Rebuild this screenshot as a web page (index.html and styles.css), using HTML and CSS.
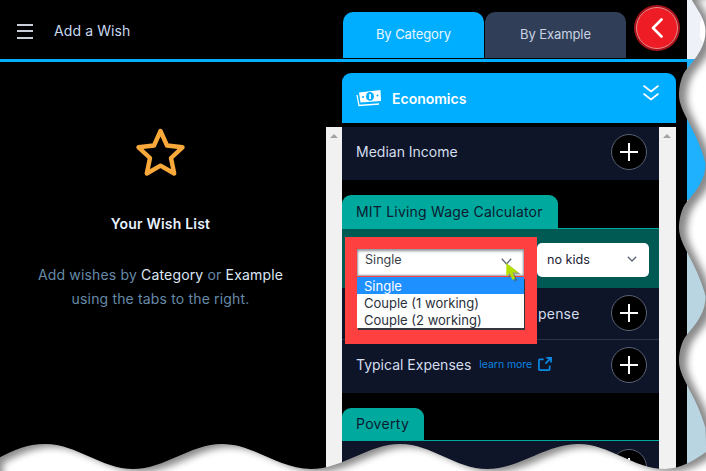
FILE: index.html
```html
<!DOCTYPE html>
<html lang="en">
<head>
    <meta charset="UTF-8">
    <meta name="viewport" content="width=device-width, initial-scale=1.0">
    <title>Add a Wish</title>
    <link rel="stylesheet" href="styles.css">
</head>
<body>
    <div class="page">
        <div class="app">
            <!-- Top bar with the tabs -->
            <header class="topbar">
                <div class="topbar-left">
                    <div class="burger"><span></span><span></span><span></span></div>
                    <div class="topbar-title">Add a Wish</div>
                </div>
                <nav class="tabs">
                    <div class="tab tab-active">By Category</div>
                    <div class="tab">By Example</div>
                </nav>
                <div class="back-btn">
                    <svg width="12" height="20" viewBox="0 0 12 20"><polyline points="10.5,1.5 2,10 10.5,18.5" fill="none" stroke="#fff" stroke-width="2.6" stroke-linecap="round" stroke-linejoin="round"/></svg>
                </div>
            </header>

            <div class="content">
                <!-- Left: the wish list -->
                <aside class="wish-panel">
                    <svg class="star" width="51" height="49" viewBox="0 0 51 49"><polygon points="25.5,3 32,17.5 47.5,19.3 36,30 39.2,45.5 25.5,37.6 11.8,45.5 15,30 3.5,19.3 19,17.5" fill="none" stroke="#f9a83a" stroke-width="4.4" stroke-linejoin="round"/></svg>
                    <h2 class="wish-title">Your Wish List</h2>
                    <p class="wish-text">Add wishes by <b>Category</b> or <b>Example</b><br>using the tabs to the right.</p>
                </aside>

                <!-- Right: category picker -->
                <section class="picker">
                    <div class="cat-head">
                        <svg class="cat-icon" width="26" height="18" viewBox="0 0 26 18">
                            <path d="M1 6 L3 16.5 L23 15" fill="none" stroke="#fff" stroke-width="1.3"/>
                            <polygon points="3,3.5 24.5,1 25,12 4.5,13.5" fill="#fff"/>
                            <ellipse cx="14" cy="7.4" rx="4" ry="4.4" fill="#00aeff"/>
                            <rect x="13.2" y="5" width="1.7" height="5" fill="#fff"/>
                            <circle cx="7" cy="8" r="1" fill="#00aeff"/>
                            <circle cx="21.5" cy="6.6" r="1" fill="#00aeff"/>
                        </svg>
                        <span class="cat-name">Economics</span>
                        <svg class="cat-toggle" width="16" height="16" viewBox="0 0 16 16"><path d="M1 1 L8 6.5 L15 1 M1 9 L8 14.5 L15 9" fill="none" stroke="#fff" stroke-width="1.6" stroke-linecap="round" stroke-linejoin="round"/></svg>
                    </div>

                    <div class="scroll-wrap">
                        <div class="scrollbar"><i class="scroll-up"></i></div>
                        <div class="list">
                            <div class="row">
                                <span class="row-label">Median Income</span>
                                <div class="plus"></div>
                            </div>

                            <div class="group-tab">MIT Living Wage Calculator</div>
                            <div class="band">
                                <div class="select">
                                    <span>no kids</span>
                                    <svg width="10" height="6" viewBox="0 0 10 6"><polyline points="0.8,0.8 5,5 9.2,0.8" fill="none" stroke="#5c6678" stroke-width="1.3"/></svg>
                                </div>

                                <!-- Red box and cursor drawn over the screenshot -->
                                <div class="annot">
                                    <div class="fake-select">
                                        <span>Single</span>
                                        <svg width="11" height="7" viewBox="0 0 11 7"><polyline points="0.8,0.8 5.5,6 10.2,0.8" fill="none" stroke="#5c6678" stroke-width="1.3"/></svg>
                                    </div>
                                    <div class="dropdown">
                                        <div class="option option-on">Single</div>
                                        <div class="option">Couple (1 working)</div>
                                        <div class="option">Couple (2 working)</div>
                                    </div>
                                    <svg class="cursor" width="17" height="20" viewBox="0 0 15 18">
                                        <polygon points="2,2 2,14 5,11 7.5,17 10,16 7.5,10.5 13,10.5" fill="#5a5f3a" opacity="0.6" transform="translate(1 0.5)"/>
                                        <polygon points="1,1 1,13 4,10 6.5,16 9,15 6.5,9.5 12,9.5" fill="#b4e000"/>
                                    </svg>
                                </div>
                            </div>
                            <div class="row row-split">
                                <!-- the red box hides the start of this label -->
                                <span class="row-label row-label-cut">pense</span>
                                <div class="plus"></div>
                            </div>
                            <div class="row">
                                <span class="row-label">Typical Expenses</span>
                                <a class="learn-more">learn more
                                    <svg width="14" height="14" viewBox="0 0 15 15"><path d="M6 2.5 H2 a1 1 0 0 0 -1 1 V13 a1 1 0 0 0 1 1 H11.5 a1 1 0 0 0 1 -1 V9 M8 7 L14 1 M9 1 H14 V6" fill="none" stroke="#0a8ce8" stroke-width="1.8"/></svg>
                                </a>
                                <div class="plus"></div>
                            </div>

                            <div class="group-tab group-tab-short">Poverty</div>
                            <div class="group-line"></div>
                            <div class="row row-last">
                                <div class="plus"></div>
                            </div>
                        </div>
                        <div class="scrollbar scrollbar-right"><i class="scroll-up"></i></div>
                    </div>
                </section>
            </div>
        </div>

        <div class="strip">
            <div class="strip-top"><span class="strip-dot"></span></div>
            <div class="strip-blue"></div>
            <div class="strip-pale"></div>
        </div>

        <!-- Torn paper edge of the screenshot -->
        <svg class="tear" width="706" height="471" viewBox="0 0 706 471">
            <defs>
                <path id="edge" d="M689 -5 C696 8 705 18 705.5 30 C706 48 694 60 686 70 C682 75 679 85 679 95 C679 112 697 130 705.5 163 C706 181 694 193 686 203 C682 208 679 218 679 228 C679 245 697 263 705.5 296 C706 314 694 326 686 336 C682 341 679 351 679 361 C679 378 697 396 705.5 428 C706 436 706 444 706 452 C695 460 680 469 665 469 C633 469 610 444 578 444 C546 444 519 469 487 469 C455 469 432 444 400 444 C368 444 343 469 311 469 C279 469 254 444 222 444 C190 444 165 469 133 469 C101 469 77 444 45 444 C25 444 10 452 -5 460 L-5 480 L720 480 L720 -5 Z"/>
                <clipPath id="tear-clip"><use href="#edge"/></clipPath>
                <filter id="soft"><feGaussianBlur stdDeviation="3.5"/></filter>
            </defs>
            <use href="#edge" fill="#8a8a8a"/>
            <g clip-path="url(#tear-clip)">
                <use href="#edge" fill="#fff" filter="url(#soft)" transform="translate(8 3)"/>
            </g>
        </svg>
    </div>
</body>
</html>
```

FILE: styles.css
```css
* {
    box-sizing: border-box;
}

body {
    margin: 0;
    background-color: #000;
    font-family: Inter, "Liberation Sans", sans-serif;
    font-size: 14px;
    overflow: hidden;
}

.page {
    position: relative;
    display: flex;
    width: 706px;
    height: 471px;
    overflow: hidden;
}

.app {
    width: 687px;
    flex: none;
}

/* Top bar */
.topbar {
    display: flex;
    align-items: flex-end;
    height: 62px;
    padding-right: 9px;
    border-bottom: 3px solid #00aeff;
}

.topbar-left {
    display: flex;
    align-items: center;
    align-self: stretch;
    flex: 1;
    padding: 3px 0 0 17px;
}

.burger {
    display: flex;
    flex-direction: column;
    gap: 4.5px;
    width: 16px;
}

.burger span {
    height: 2px;
    background-color: #c9ced8;
}

.topbar-title {
    margin: -2px 0 0 21px;
    color: #c8d8f0;
    letter-spacing: 0.1px;
}

.tabs {
    display: flex;
    gap: 1px;
    margin-bottom: 1px;
}

.tab {
    display: flex;
    align-items: center;
    justify-content: center;
    width: 141px;
    height: 46px;
    padding-bottom: 2px;
    border-radius: 10px 10px 0 0;
    background-color: #303f57;
    color: #c8d2e2;
    font-size: 13px;
    letter-spacing: -0.1px;
}

.tab-active {
    background-color: #00aeff;
    color: #e8f6ff;
}

.back-btn {
    display: flex;
    align-items: center;
    justify-content: center;
    width: 42px;
    height: 42px;
    margin: 0 0 10px 10px;
    border-radius: 50%;
    background-color: #ee1c25;
    border: 1px solid #e88a8e;
    box-shadow: 0 0 0 2px #a5141b;
}

.content {
    display: flex;
}

/* Wish list */
.wish-panel {
    display: flex;
    flex-direction: column;
    align-items: center;
    width: 326px;
    flex: none;
    padding: 66px 5px 0 0;
}

.star {
    display: block;
}

.wish-title {
    margin: 38px 0 0;
    color: #e8f2ff;
    font-size: 14px;
    font-weight: 600;
    line-height: 17px;
    letter-spacing: 0.2px;
}

.wish-text {
    margin: 31px 0 0;
    color: #668aa8;
    line-height: 24px;
    text-align: center;
    letter-spacing: 0.16px;
}

.wish-text b {
    color: #dde8f5;
    font-weight: 400;
}

/* Category picker */
.picker {
    width: 350px;
    flex: none;
    padding-top: 11px;
}

.cat-head {
    display: flex;
    align-items: center;
    height: 50px;
    margin-left: 16px;
    padding: 0 17px 0 14px;
    border-radius: 9px 9px 0 0;
    background-color: #00aeff;
    color: #fff;
}

.cat-name {
    margin-left: 10px;
    font-weight: 600;
}

.cat-toggle {
    margin: -10px 0 0 auto;
}

.scroll-wrap {
    display: flex;
    height: 344px;
    margin-top: 4px;
}

.scrollbar {
    display: flex;
    justify-content: center;
    width: 16px;
    flex: none;
    padding: 7px 1px 0 0;
    background-color: #f1f1f1;
}

.scrollbar-right {
    width: 17px;
}

.scroll-up {
    width: 0;
    height: 0;
    border-left: 4px solid transparent;
    border-right: 4px solid transparent;
    border-bottom: 4px solid #a3a3a3;
}

.list {
    flex: 1;
    min-width: 0;
}

.row {
    display: flex;
    align-items: center;
    padding: 7px 12px 10px 14px;
    background-color: #0e1528;
}

.row-split {
    padding-bottom: 8px;
    border-bottom: 1px solid #2c3448;
}

.row-last {
    padding-top: 8px;
}

.row-label {
    margin-top: -2px;
    color: #d3deee;
}

.row-label-cut {
    margin: 0 0 0 182px;
    letter-spacing: 0.2px;
}

.plus {
    position: relative;
    width: 36px;
    height: 36px;
    flex: none;
    margin-left: auto;
    border-radius: 50%;
    border: 1px solid #5a6274;
    background-color: #000;
}

.plus::before,
.plus::after {
    content: "";
    position: absolute;
    background-color: #fff;
}

.plus::before {
    left: 8px;
    right: 8px;
    top: 16px;
    height: 2px;
}

.plus::after {
    top: 8px;
    bottom: 8px;
    left: 16px;
    width: 2px;
}

.learn-more {
    display: flex;
    align-items: center;
    gap: 6px;
    margin: -2px 0 0 8px;
    color: #0a84e0;
    font-size: 10.5px;
    letter-spacing: -0.05px;
}

.group-tab {
    display: flex;
    align-items: center;
    width: fit-content;
    height: 33px;
    margin-top: 15px;
    padding: 0 15px 0 14px;
    border-radius: 9px 9px 0 0;
    background-color: #00a99d;
    color: #0b1a30;
    letter-spacing: 0.2px;
}

.group-tab-short {
    height: 32px;
    padding-bottom: 1px;
    letter-spacing: 0.3px;
}

.group-line {
    height: 1px;
    background-color: #00a99d;
}

.band {
    position: relative;
    display: flex;
    justify-content: flex-end;
    height: 60px;
    padding: 14px 10px 0 0;
    border-top: 1px solid #00a99d;
    background-color: #005a54;
}

.select {
    display: flex;
    align-items: center;
    justify-content: space-between;
    width: 112px;
    height: 34px;
    padding: 0 12px 2px 10px;
    border-radius: 5px;
    background-color: #fff;
    color: #223;
    font-size: 12.6px;
}

/* Annotation over the screenshot */
.annot {
    position: absolute;
    left: 3px;
    top: 8px;
    width: 192px;
    height: 107px;
    padding: 12px 13px 0 12px;
    background-color: #ff4040;
}

.fake-select {
    display: flex;
    justify-content: space-between;
    height: 27px;
    padding: 3px 12px 0 8px;
    background-color: #fff;
    box-shadow: inset 0 3px 3px -1px #8a8f96, inset 2px 0 2px -1px #9a9fa6, inset -2px 0 2px -1px #9a9fa6, inset 0 -2px 2px -1px #9a9fa6;
    color: #3a3f4a;
    font-size: 12.6px;
    line-height: 16px;
}

.fake-select svg {
    margin-top: 6px;
}

.dropdown {
    margin-top: 1px;
    background-color: #fff;
    box-shadow: 1px 2px 0 #33373d;
}

.option {
    height: 17px;
    padding-left: 7px;
    color: #2a2f3a;
    font-size: 13px;
    line-height: 19px;
}

.option-on {
    background-color: #1e90ff;
    color: #fff;
}

.cursor {
    position: absolute;
    left: 160px;
    top: 25px;
}

/* Page seen behind the tear */
.strip {
    display: flex;
    flex-direction: column;
    flex: 1;
}

.strip-top {
    display: flex;
    align-items: center;
    justify-content: flex-end;
    height: 59px;
    background-color: #eef1f7;
}

.strip-dot {
    width: 6px;
    height: 24px;
    border-radius: 12px 0 0 12px;
    background-color: #fff;
}

.strip-blue {
    height: 141px;
    background-color: #1fb1fd;
}

.strip-pale {
    flex: 1;
    background-color: #b9d5e2;
}

.tear {
    position: absolute;
    left: 0;
    top: 0;
}
```
